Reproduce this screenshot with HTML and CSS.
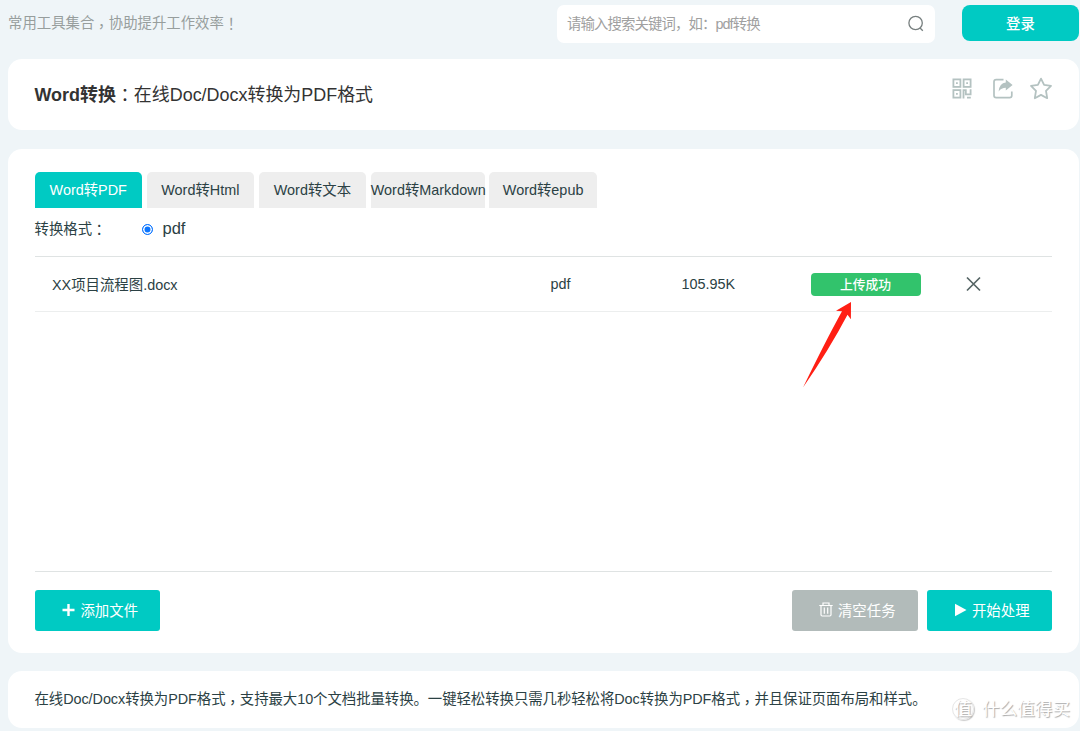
FILE: index.html
```
<!DOCTYPE html>
<html lang="zh-CN">
<head>
  <meta charset="UTF-8" />
  <meta name="viewport" content="width=device-width, initial-scale=1.0"/>
  <title>Word转换</title>
  <link rel="stylesheet" href="styles.css">
</head>
<body>
  <div class="header">
    <p class="slogan">常用工具集合<span class="comma" lang="zh-Hant">，</span>协助提升工作效率<span class="mid" lang="zh-Hant">！</span></p>
    <div class="search">
      <input type="text" placeholder="请输入搜索关键词，如：pdf转换">
      <svg width="18" height="18" viewBox="0 0 18 18" fill="none" stroke="#777f7f" stroke-width="1.3">
        <circle cx="8.6" cy="8" r="6.7"/>
        <path d="M12.8 12.8l3 3"/>
      </svg>
    </div>
    <button class="login">登录</button>
  </div>

  <div class="card title-card">
    <h1><strong>Word转换</strong><span class="mid" lang="zh-Hant">：</span>在线Doc/Docx转换为PDF格式</h1>
    <div class="actions">
      <svg width="20" height="22" viewBox="0 0 20 22" fill="none" stroke="#b4c2c1" stroke-width="1.8">
        <rect x="1.4" y="1.4" width="7" height="7.5"/>
        <rect x="11.6" y="1.4" width="7" height="7.5"/>
        <rect x="1.4" y="12.1" width="7" height="7.5"/>
        <path d="M4 5.1h1.8M14.2 5.1h1.8M4 15.8h1.8M11.5 20.5v-8.4h2.3v4.2h4.8v-5M15 19.6h3.8"/>
      </svg>
      <svg width="22" height="22" viewBox="0 0 22 22" fill="none" stroke="#b4c2c1" stroke-width="1.7">
        <path d="M11.5 1.6H4.2Q2 1.6 2 3.8v13.6q0 2.2 2.2 2.2h13.4q2.2 0 2.2-2.2v-4"/>
        <path d="M13.8 1.5l6.8 5.6-6.8 5.4V9.7q-4.5 0-7.2 3.7Q7.5 5 13.8 4.5z" fill="#b4c2c1" stroke="none"/>
      </svg>
      <svg width="24" height="24" viewBox="0 0 24 24" fill="none" stroke="#b4c2c1" stroke-width="1.8" stroke-linejoin="round">
        <path d="M12 1.6l3.1 6.3 6.9 1-5 5 1.2 7.3L12 17.9l-6.2 3.3L7 13.9l-5-5 6.9-1z"/>
      </svg>
    </div>
  </div>

  <div class="card main">
    <div class="tabs">
      <a class="tab active">Word转PDF</a>
      <a class="tab">Word转Html</a>
      <a class="tab">Word转文本</a>
      <a class="tab wide">Word转Markdown</a>
      <a class="tab">Word转epub</a>
    </div>
    <div class="format">
      <span class="format-label">转换格式<span class="mid" lang="zh-Hant">：</span></span>
      <span class="radio"></span>
      <span class="format-value">pdf</span>
    </div>

    <div class="files">
      <div class="file">
        <span class="name">XX项目流程图.docx</span>
        <span class="type">pdf</span>
        <span class="size">105.95K</span>
        <span class="badge">上传成功</span>
        <svg class="remove" width="16" height="16" viewBox="0 0 16 16" fill="none" stroke="#566565" stroke-width="1.7">
          <path d="M2 1.5l13 13M15 1.5l-13 13"/>
        </svg>
      </div>
    </div>

    <div class="buttons">
      <button class="btn add">
        <svg width="14" height="14" viewBox="0 0 14 14" stroke="#fff" stroke-width="2.4"><path d="M7.5 1v12M1.5 7h12"/></svg>
        添加文件
      </button>
      <button class="btn clear">
        <svg width="14" height="15" viewBox="0 0 14 15" fill="none" stroke="#fff" stroke-width="1.2"><path d="M.3 3.5h13.4M4 3.3V1h6v2.3M2 3.5v9.3q0 1.2 1.2 1.2h7.6q1.2 0 1.2-1.2V3.5M5.3 5.5v6.2M8.7 5.5v6.2"/></svg>
        清空任务
      </button>
      <button class="btn">
        <svg width="13" height="14" viewBox="0 0 13 14" fill="#fff"><path d="M1 .8v12.4L12.5 7z"/></svg>
        开始处理
      </button>
    </div>
  </div>

  <div class="card intro">
    <p>在线Doc/Docx转换为PDF格式<span class="comma" lang="zh-Hant">，</span>支持最大10个文档批量转换。一键轻松转换只需几秒轻松将Doc转换为PDF格式<span class="comma" lang="zh-Hant">，</span>并且保证页面布局和样式。</p>
  </div>

  <!-- arrow pointing at the upload status -->
  <svg class="arrow" width="52" height="88" viewBox="0 0 52 88">
    <path d="M48 2L33 10.8l6 .4Q22 42 0 87.5 26 50 44.5 14.8l3.4 4.5z" fill="#ff1f14"/>
  </svg>

  <div class="watermark">
    <span class="mark">值</span>
    <span>什么值得买</span>
  </div>
</body>
</html>
```

FILE: styles.css
```
* {
  margin: 0;
  padding: 0;
  box-sizing: border-box;
}

body {
  position: relative;
  height: 731px;
  padding: 5px 1px 0 8px;
  background: #eff5f8;
  color: #2b4144;
  font-family: "Liberation Sans", "Noto Sans CJK SC", sans-serif;
  font-size: 14.4px;
  overflow: hidden;
}

button {
  border: 0;
  color: #fff;
  font-family: inherit;
  background: #00cac3;
}

svg {
  display: block;
  flex: none;
}

/* punctuation centred in its cell */
.comma,
.mid {
  position: relative;
  top: 1px;
  font-family: "Noto Sans CJK TC", sans-serif;
  line-height: 1;
}

.comma {
  top: 4px;
}

.header {
  display: flex;
  align-items: flex-start;
  height: 54px;
}

.slogan {
  width: 549px;
  line-height: 36px;
  color: #979e9d;
}

.search {
  display: flex;
  align-items: center;
  width: 378px;
  height: 38px;
  padding: 0 10px 0 10px;
  background: #fff;
  border-radius: 7px;
}

.search input {
  flex: 1;
  border: 0;
  outline: 0;
  font: inherit;
  letter-spacing: -0.9px;
}

.search input::placeholder {
  color: #a0a0a0;
}

.login {
  width: 117px;
  height: 36px;
  margin-left: 27px;
  padding-bottom: 2px;
  border-radius: 8px;
  font-size: 14.4px;
  font-weight: 500;
}

.card {
  background: #fff;
  border-radius: 14px;
}

.title-card {
  display: flex;
  justify-content: space-between;
  height: 71px;
  padding: 0 27px 0 26.5px;
}

.title-card h1 {
  font-size: 17.95px;
  font-weight: normal;
  line-height: 72px;
  color: #333;
}

.actions {
  display: flex;
  align-items: center;
  height: 59px;
}

.actions svg + svg {
  margin-left: 20px;
}

.actions svg:last-child {
  margin-left: 15px;
  margin-right: -1px;
}

.main {
  height: 504px;
  margin-top: 19px;
  padding: 22.5px 27px 0 26.5px;
}

.tabs {
  display: flex;
  gap: 4.6px;
}

.tab {
  width: 107.5px;
  height: 36px;
  line-height: 36px;
  text-align: center;
  white-space: nowrap;
  background: #eee;
  border-radius: 5px 5px 0 0;
}

.tab.wide {
  width: 114px;
}

.tab.active {
  color: #fff;
  background: #00cac3;
}

.format {
  display: flex;
  align-items: center;
  height: 48.5px;
  padding-bottom: 5px;
}

.format-label {
  width: 107px;
  line-height: 20px;
}

.radio {
  width: 11px;
  height: 11px;
  border: 1px solid #0b75ff;
  border-radius: 50%;
  background: #0b75ff;
  box-shadow: inset 0 0 0 1.5px #fff;
}

.format-value {
  margin-left: 10px;
  padding-bottom: 2px;
  font-size: 16.5px;
}

.files {
  height: 316px;
  border-top: 1px solid #dfe3e3;
  border-bottom: 1px solid #dfe3e3;
}

.file {
  display: grid;
  grid-template-columns: 498.5px 131px 129px 154px 16px;
  align-items: center;
  height: 55px;
  padding-left: 17.5px;
  border-bottom: 1px solid #eceeee;
}

.name {
  padding-bottom: 2px;
}

.badge {
  width: 110px;
  height: 23px;
  line-height: 24px;
  text-align: center;
  font-size: 12.8px;
  font-weight: 500;
  color: #fff;
  background: #32c36c;
  border-radius: 4px;
}

.buttons {
  display: flex;
  gap: 9px;
  padding-top: 18px;
}

.btn {
  display: flex;
  align-items: center;
  justify-content: center;
  gap: 5px;
  width: 125.5px;
  height: 41px;
  padding: 0 0 2px 5px;
  border-radius: 3px;
  font-size: 14.4px;
}

.btn.add {
  margin-right: auto;
}

.btn.clear {
  background: #b2bbba;
}

.intro {
  height: 57px;
  margin-top: 18px;
  padding-left: 26.5px;
  line-height: 57px;
  letter-spacing: -0.05px;
  white-space: nowrap;
}

.arrow {
  position: absolute;
  left: 803px;
  top: 300px;
}

.watermark {
  position: absolute;
  left: 952px;
  top: 698px;
  display: flex;
  align-items: center;
  gap: 8px;
  height: 22px;
  font-size: 17.6px;
  line-height: 22px;
  color: #fff;
  text-shadow: 1px 1px 1px #aaa;
}

.mark {
  width: 22px;
  height: 22px;
  line-height: 20px;
  text-align: center;
  border: 1px solid #e6e6e6;
  border-radius: 50%;
  box-shadow: 1px 1px 1px #ccc;
}
```
